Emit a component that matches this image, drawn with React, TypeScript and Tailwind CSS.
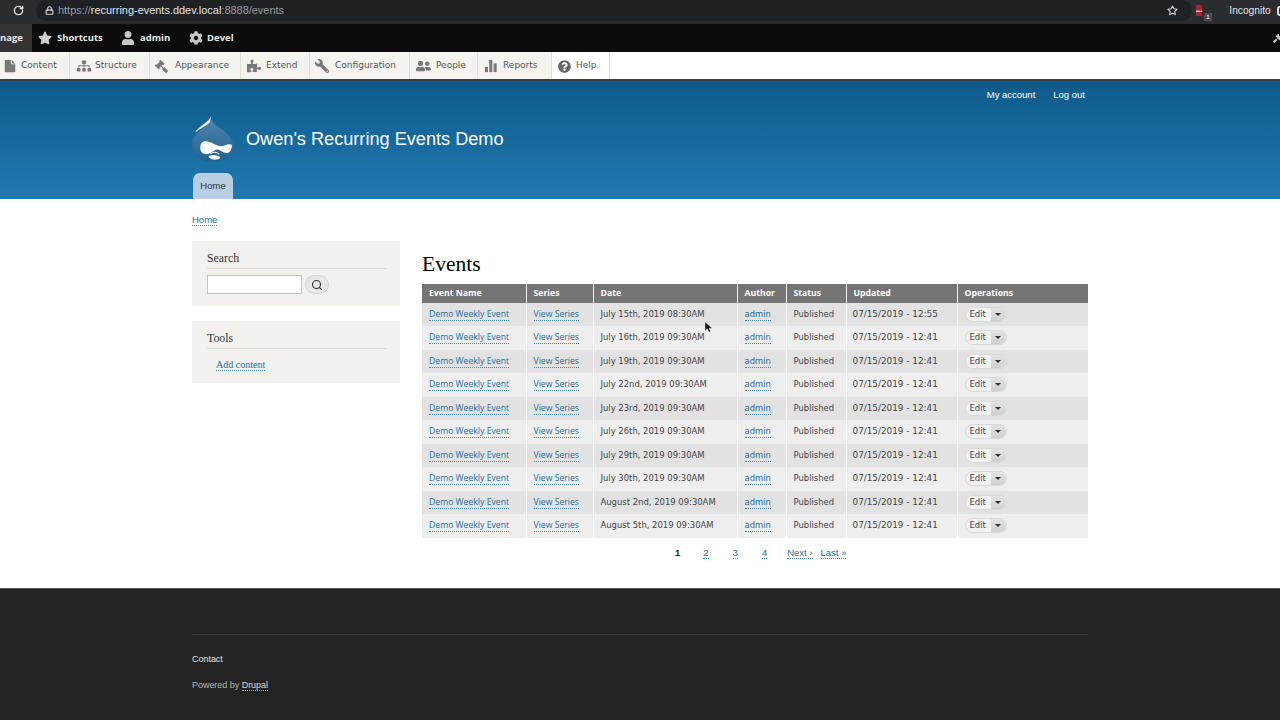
import React from "react";
import { FaStar, FaUser, FaCog, FaSitemap, FaPuzzlePiece, FaWrench, FaQuestionCircle, FaGavel, FaUserFriends } from "react-icons/fa";
import { FiSearch, FiStar } from "react-icons/fi";
import { LuRotateCw, LuLock } from "react-icons/lu";

const FileIcon = () => (
  <svg viewBox="0 0 16 16" className="w-[14px] h-[14px] fill-[#787878]"><path d="M2 1h7v5h5v9H2zM10 1l4 4h-4z" /></svg>
);
const BarsIcon = () => (
  <svg viewBox="0 0 16 16" className="w-[14px] h-[14px] fill-[#787878]"><rect x="1" y="9" width="3.5" height="6" /><rect x="6" y="1" width="3.5" height="14" /><rect x="11" y="5" width="3.5" height="10" /></svg>
);

const tray = [
  { label: "Content", icon: <FileIcon />, cls: "w-[70px] pl-[3px] gap-[4px]" },
  { label: "Structure", icon: <FaSitemap className="w-[14px] h-[14px] text-[#787878]" />, cls: "w-[80px] pl-[7px] gap-[4px]" },
  { label: "Appearance", icon: <FaGavel className="w-[13px] h-[13px] text-[#787878] -scale-x-100" />, cls: "w-[91px] pl-[5px] gap-[7px]" },
  { label: "Extend", icon: <FaPuzzlePiece className="w-[14px] h-[14px] text-[#787878]" />, cls: "w-[69px] pl-[6px] gap-[5px]" },
  { label: "Configuration", icon: <FaWrench className="w-[14px] h-[14px] text-[#787878] -scale-x-100" />, cls: "w-[100px] pl-[5px] gap-[6px]" },
  { label: "People", icon: <FaUserFriends className="w-[15px] h-[14px] text-[#787878]" />, cls: "w-[68px] pl-[6px] gap-[5px]" },
  { label: "Reports", icon: <BarsIcon />, cls: "w-[74px] pl-[6px] gap-[5px]" },
  { label: "Help", icon: <FaQuestionCircle className="w-[13px] h-[13px] text-[#666]" />, cls: "w-[58px] bg-white pl-[6px] gap-[5px]" },
];

const rows = [
  ["July 15th, 2019 08:30AM", "07/15/2019 - 12:55"],
  ["July 16th, 2019 09:30AM", "07/15/2019 - 12:41"],
  ["July 19th, 2019 09:30AM", "07/15/2019 - 12:41"],
  ["July 22nd, 2019 09:30AM", "07/15/2019 - 12:41"],
  ["July 23rd, 2019 09:30AM", "07/15/2019 - 12:41"],
  ["July 26th, 2019 09:30AM", "07/15/2019 - 12:41"],
  ["July 29th, 2019 09:30AM", "07/15/2019 - 12:41"],
  ["July 30th, 2019 09:30AM", "07/15/2019 - 12:41"],
  ["August 2nd, 2019 09:30AM", "07/15/2019 - 12:41"],
  ["August 5th, 2019 09:30AM", "07/15/2019 - 12:41"],
];

const heads = ["Event Name", "Series", "Date", "Author", "Status", "Updated", "Operations"];
const colW = ["w-[104px]", "w-[67px]", "w-[144px]", "w-[49px]", "w-[60px]", "w-[111px]", "w-[131px]"];

const A = ({ children, className = "" }: { children: React.ReactNode; className?: string }) => (
  <a className={"text-[#1d6f9f] border-b border-dotted border-[#4a8ab0] leading-[11px] inline-block " + className}>{children}</a>
);

const Logo = () => (
  <svg viewBox="0 0 120 134" className="w-[41px] h-[46px] shrink-0">
    <defs>
      <linearGradient id="drop" x1="0" y1="0" x2="0" y2="1">
        <stop offset="0" stopColor="#4f86ae" />
        <stop offset="1" stopColor="#22628f" />
      </linearGradient>
    </defs>
    <path d="M54 2C58 20 75 30 95 45C112 58 120 72 120 88C120 115 92 134 60 134C28 134 0 115 0 86C0 55 25 42 40 30C48 24 53 12 54 2z" fill="url(#drop)" />
    <path d="M54 2C50 15 35 22 22 33C14 40 10 45 10 48C25 35 45 28 52 18C55 13 55 6 54 2z" fill="#eef3f7" />
    <path d="M35 74C25 76 22 90 26 102C30 112 45 114 55 108C62 104 68 96 76 98C84 100 92 110 104 108C114 106 118 92 116 84C108 78 95 88 84 88C72 88 50 70 35 74z" fill="#fff" />
    <path d="M48 118C58 112 74 112 84 122C74 130 56 130 48 118z" fill="#fff" />
    <path d="M54 110C62 104 74 104 80 112" fill="none" stroke="#fff" strokeWidth="3" />
  </svg>
);

export default function App() {
  return (
    <div className="relative w-[1280px] h-[720px] overflow-hidden bg-white font-['Liberation_Sans',sans-serif]">
      {/* browser bar */}
      <div className="h-[24px] bg-[#2a2c2f] flex items-start text-[#dadce0]">
        <LuRotateCw className="ml-[13px] mt-[5px] w-[11px] h-[11px] text-[#e4e4e4]" strokeWidth={3} />
        <div className="ml-[12px] flex-1 h-[21px] flex items-center bg-[#1f2124] rounded-full">
          <LuLock className="ml-[9px] w-[9px] h-[9px] text-[#d8d8d8]" strokeWidth={3} />
          <span className="ml-[4px] text-[10.95px] text-[#9a9c9f]">
            https://<span className="text-[#e4e4e4]">recurring-events.ddev.local</span>:8888/events
          </span>
          <div className="flex-1" />
          <FiStar className="w-[11px] h-[11px] text-[#d4d4d4] mr-[14px]" strokeWidth={2.4} />
        </div>
        <div className="w-[88px] h-[21px] flex items-center shrink-0">
          <div className="relative ml-[4px] w-[12px] h-[11px] bg-[#b3202c] rounded-[1px] flex items-center justify-center">
            <span className="text-white text-[6px] leading-[6px] font-bold">•••</span>
            <span className="absolute left-[8px] top-[8px] w-[8px] h-[8px] bg-[#4a4c4f] text-white text-[6px] leading-[8px] text-center">1</span>
          </div>
          <div className="ml-[13px] w-px h-[11px] bg-[#4a4c4f]" />
          <span className="ml-[14px] text-[10.2px] text-[#e2e2e2]">Incognito</span>
          <div className="ml-[6px] w-[6px] h-[10px] rounded-full border-2 border-[#dddddd] shrink-0" />
        </div>
      </div>
      {/* admin toolbar */}
      <div className="h-[28px] bg-[#0c0c0c] flex items-center text-[9.5px] font-bold text-[#e8e8e8] font-['Open_Sans',sans-serif] overflow-hidden">
        <div className="h-full w-[32px] bg-[#333333] flex items-center">
          <span>nage</span>
        </div>
        <FaStar className="ml-[6px] w-[14px] h-[14px] text-[#d0d0d0]" />
        <span className="ml-[5px] w-[45px]">Shortcuts</span>
        <FaUser className="ml-[19px] w-[14px] h-[14px] text-[#c8c8c8]" />
        <span className="ml-[5px] w-[30px]">admin</span>
        <FaCog className="ml-[19px] w-[14px] h-[14px] text-[#c8c8c8]" />
        <span className="ml-[4px]">Devel</span>
        <div className="flex-1" />
        <FaGavel className="w-[9px] h-[9px] text-[#c8c8c8] -mr-[2px]" />
      </div>
      {/* tray */}
      <div className="h-[29px] bg-white flex border-b-2 border-[#3a3f44] text-[9px] text-[#555] font-['DejaVu_Sans',sans-serif]">
        {tray.map((t) => (
          <div key={t.label} className={"h-full flex items-center pt-px bg-[#f4f3f0] border-r border-[#dfdfda] " + t.cls}>
            {t.icon}
            <span>{t.label}</span>
          </div>
        ))}
      </div>
      {/* header */}
      <div className="h-[118px] bg-gradient-to-b from-[#0e5a8b] to-[#2079b0]">
        <div className="mx-auto w-[896px] h-full flex flex-col">
          <div className="flex justify-end gap-[18px] pr-[3px] pt-[7.5px] text-[9.5px] leading-[12px] text-white">
            <span>My account</span>
            <span>Log out</span>
          </div>
          <div className="flex items-center mt-[15.5px]">
            <Logo />
            <span className="ml-[13px] text-[18.15px] leading-[24px] text-white">Owen's Recurring Events Demo</span>
          </div>
          <div className="mt-auto ml-px w-[40px] h-[26px] rounded-t-[7px] bg-[#b7cee3] flex items-center justify-center text-[9.5px] text-[#333]">
            Home
          </div>
        </div>
      </div>
      {/* main */}
      <div className="mx-auto w-[896px] h-[389px]">
        <div className="pt-[14px] h-[42px] text-[9.5px]">
          <A>Home</A>
        </div>
        <div className="flex">
          <div className="w-[208px] shrink-0 flex flex-col gap-[15px] font-['Liberation_Serif',serif]">
            <div className="h-[65px] bg-[#f2f1ed] px-[15px] pt-[10px]">
              <div className="text-[11.8px] leading-[14px] text-[#333] border-b border-[#d8d7d2] pb-[3px] w-[179px]">Search</div>
              <div className="flex items-center mt-[6px] gap-[3px]">
                <div className="w-[95px] h-[19px] bg-white border border-[#c4c4c4]" />
                <div className="w-[24px] h-[19px] rounded-full bg-[#e8e7e3] border border-[#d4d3ce] flex items-center justify-center">
                  <FiSearch className="w-[12px] h-[12px] text-[#333]" strokeWidth={2.2} />
                </div>
              </div>
            </div>
            <div className="h-[62px] bg-[#f2f1ed] px-[15px] pt-[10px]">
              <div className="text-[11.8px] leading-[14px] text-[#333] border-b border-[#d8d7d2] pb-[3px] w-[179px]">Tools</div>
              <div className="mt-[8px] ml-[9px] text-[10px]">
                <A>Add content</A>
              </div>
            </div>
          </div>
          <div className="ml-[22px] flex-1">
            <h1 className="h-[43px] pt-[10px] text-[21.5px] leading-[26px] text-black font-['Liberation_Serif',serif]">Events</h1>
            <table className="w-[666px] table-fixed border-collapse font-['DejaVu_Sans',sans-serif] text-[8.45px] text-[#444]">
              <thead>
                <tr className="h-[18.5px] bg-[#757575] text-white font-['Open_Sans',sans-serif] text-[8.7px]">
                  {heads.map((h, i) => (
                    <th key={h} className={"text-left font-bold pl-[7px] border-r border-[#f2f2f2] last:border-r-0 " + colW[i]}>{h}</th>
                  ))}
                </tr>
              </thead>
              <tbody>
                {rows.map((r, i) => (
                  <tr key={i} className={"h-[23.5px] " + (i % 2 === 0 ? "bg-[#e2e2e2]" : "bg-[#eeeeee]")}>
                    <td className="pl-[7px] border-r border-white font-['Open_Sans',sans-serif] text-[8.66px]"><A>Demo Weekly Event</A></td>
                    <td className="pl-[7px] border-r border-white font-['Open_Sans',sans-serif] text-[8.66px]"><A>View Series</A></td>
                    <td className="pl-[7px] border-r border-white">{r[0]}</td>
                    <td className="pl-[7px] border-r border-white"><A>admin</A></td>
                    <td className="pl-[7px] border-r border-white">Published</td>
                    <td className="pl-[6px] border-r border-white text-[8.85px]">{r[1]}</td>
                    <td className="pl-[7px]">
                      <div className="w-[42px] h-[15px] rounded-full bg-[#f1f1f1] border border-[#d8d8d8] flex items-center">
                        <span className="pl-[4px] w-[25px]">Edit</span>
                        <span className="h-full flex-1 rounded-r-full bg-gradient-to-b from-[#e2e2e2] to-[#d0d0d0] flex items-center justify-start pl-[4px]">
                          <span className="w-0 h-0 border-x-[3px] border-x-transparent border-t-[3px] border-t-[#333]" />
                        </span>
                      </div>
                    </td>
                  </tr>
                ))}
              </tbody>
            </table>
            <div className="mt-[9px] flex text-[9.5px] leading-[11px] text-[#1d6f9f]">
              <span className="ml-[253px] font-bold text-[#222]">1</span>
              <A className="ml-[23px]">2</A>
              <A className="ml-[24px]">3</A>
              <A className="ml-[24px]">4</A>
              <A className="ml-[20px]">Next ›</A>
              <A className="ml-[8px]">Last »</A>
            </div>
          </div>
        </div>
      </div>
      {/* footer */}
      <div className="h-[132px] bg-[#232323] border-t border-[#555]">
        <div className="mx-auto w-[896px] pt-[45px] text-[8.95px] leading-[12px] text-[#b8b8b8]">
          <div className="h-px bg-[#3a3a3a]" />
          <div className="mt-[18px] text-[#e0e0e0]">Contact</div>
          <div className="mt-[14px]">
            Powered by <span className="text-[#dcdcdc] border-b border-dotted border-[#aaa]">Drupal</span>
          </div>
        </div>
      </div>
      {/* mouse cursor */}
      <svg viewBox="0 0 10 14" className="absolute left-[705px] top-[322px] w-[8px] h-[11px]">
        <path d="M0 0v11l3-2.5 2 4.5 2-1-2-4h4z" fill="#111" stroke="#fff" strokeWidth="0.4" />
      </svg>
    </div>
  );
}
